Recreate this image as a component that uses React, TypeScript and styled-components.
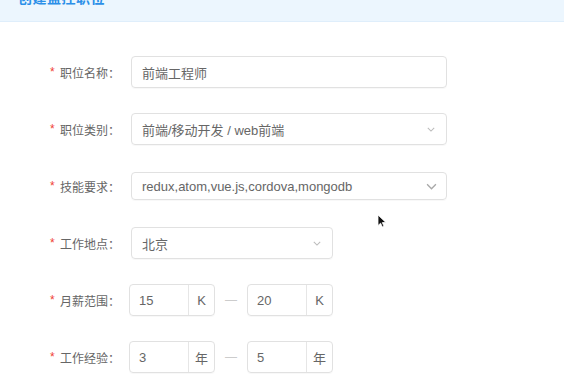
import styled, { createGlobalStyle } from "styled-components";

const GlobalStyle = createGlobalStyle`
  html, body {
    margin: 0;
    padding: 0;
    background: #fff;
  }
  body {
    font-family: "Liberation Sans", "Noto Sans CJK SC", sans-serif;
  }
`;

interface iField {
  label: string;
  kind: "input" | "select" | "tags" | "range";
  value?: string;
  width?: number;
  from?: string;
  to?: string;
  unit?: string;
}

const fields: iField[] = [
  { label: "职位名称：", kind: "input", value: "前端工程师", width: 316 },
  { label: "职位类别：", kind: "select", value: "前端/移动开发 / web前端", width: 316 },
  { label: "技能要求：", kind: "tags", value: "redux,atom,vue.js,cordova,mongodb", width: 316 },
  { label: "工作地点：", kind: "select", value: "北京", width: 202 },
  { label: "月薪范围：", kind: "range", from: "15", to: "20", unit: "K" },
  { label: "工作经验：", kind: "range", from: "3", to: "5", unit: "年" },
];

const Arrow = ({ big }: { big?: boolean }) => (
  <ArrowBox $big={big}>
    <svg width={big ? 11 : 8} height={big ? 7 : 5} viewBox="0 0 10 6">
      <polyline points="1,1 5,5 9,1" fill="none" stroke="currentColor" strokeWidth={big ? 1.2 : 1.3} />
    </svg>
  </ArrowBox>
);

const App = () => {
  return (
    <>
      <GlobalStyle />
      <Page>
        <Header>
          <HeaderTitle>创建监控职位</HeaderTitle>
        </Header>
        <Form>
          {fields.map((f) => (
            <Row key={f.label}>
              <Label>
                <Star>*</Star>
                {f.label}
              </Label>
              {f.kind === "input" && (
                <Box $w={f.width}>
                  <Value>{f.value}</Value>
                </Box>
              )}
              {f.kind === "select" && (
                <Box $w={f.width}>
                  <Value>{f.value}</Value>
                  <Arrow />
                </Box>
              )}
              {f.kind === "tags" && (
                <Box $w={f.width} $h={28}>
                  <Value>{f.value}</Value>
                  <Arrow big />
                </Box>
              )}
              {f.kind === "range" && (
                <Range>
                  <Group>
                    <GroupValue>{f.from}</GroupValue>
                    <Addon>{f.unit}</Addon>
                  </Group>
                  <Dash>—</Dash>
                  <Group>
                    <GroupValue>{f.to}</GroupValue>
                    <Addon>{f.unit}</Addon>
                  </Group>
                </Range>
              )}
            </Row>
          ))}
        </Form>
        <Cursor>
          <svg width="10" height="14" viewBox="0 0 10 14">
            <path d="M1 1 L1 11.5 L3.6 9.2 L5.4 13 L7 12.3 L5.3 8.6 L8.8 8.4 Z" fill="#111" stroke="#fff" strokeWidth="0.8" />
          </svg>
        </Cursor>
      </Page>
    </>
  );
};
export default App;

const Page = styled.div`
  position: relative;
  width: 564px;
  height: 383px;
  overflow: hidden;
  background: #fff;
`;

const Header = styled.div`
  height: 21px;
  display: flex;
  align-items: flex-end;
  padding: 0 18px 0;
  background: #ecf6fe;
  border-bottom: 1px solid #dfeefb;
  overflow: hidden;
`;

const HeaderTitle = styled.div`
  font-size: 14px;
  line-height: 16px;
  font-weight: bold;
  color: #2b8fe8;
  margin-bottom: 15px;
  letter-spacing: 0.5px;
`;

const Form = styled.div`
  display: flex;
  flex-direction: column;
  gap: 25px;
  padding-top: 34px;
`;

const Row = styled.div`
  display: grid;
  grid-template-columns: 120px auto;
  column-gap: 11px;
  align-items: center;
  height: 32px;
`;

const Label = styled.div`
  display: flex;
  align-items: center;
  justify-content: flex-end;
  font-size: 12px;
  color: #666;
  font-family: "Noto Sans CJK SC", sans-serif;
`;

const Star = styled.span`
  color: #f04134;
  font-family: "Liberation Mono", monospace;
  font-size: 12px;
  margin-right: 4px;
  position: relative;
  top: 1px;
`;

const Box = styled.div<{ $w?: number; $h?: number }>`
  box-sizing: border-box;
  width: ${(p) => p.$w || 316}px;
  height: ${(p) => p.$h || 32}px;
  display: flex;
  align-items: center;
  justify-content: space-between;
  padding: 0 9px 0 10px;
  border: 1px solid #e1e1e1;
  border-radius: 4px;
  box-shadow: 0 1px 1px rgba(0, 0, 0, 0.03);
`;

const Value = styled.span`
  font-size: 13px;
  color: #666;
  font-family: "Liberation Sans", "Noto Sans CJK SC", sans-serif;
`;

const ArrowBox = styled.span<{ $big?: boolean }>`
  display: flex;
  align-items: center;
  color: ${(p) => (p.$big ? "#a8a8a8" : "#bbb")};
  margin-right: ${(p) => (p.$big ? "0" : "2px")};
`;

const Range = styled.div`
  display: flex;
  align-items: center;
  margin-left: -2px;
`;

const Group = styled.div`
  box-sizing: border-box;
  width: 86px;
  height: 32px;
  display: flex;
  border: 1px solid #e1e1e1;
  border-radius: 4px;
  box-shadow: 0 1px 1px rgba(0, 0, 0, 0.03);
`;

const GroupValue = styled.div`
  flex: 1;
  display: flex;
  align-items: center;
  padding-left: 9px;
  font-size: 13px;
  color: #666;
`;

const Addon = styled.div`
  width: 25px;
  display: flex;
  align-items: center;
  justify-content: center;
  border-left: 1px solid #e6e6e6;
  font-size: 13px;
  color: #666;
  font-family: "Liberation Sans", "Noto Sans CJK SC", sans-serif;
`;

const Dash = styled.div`
  width: 32px;
  text-align: center;
  font-size: 12px;
  color: #ccc;
`;

const Cursor = styled.div`
  position: absolute;
  left: 377px;
  top: 214px;
  line-height: 0;
`;
